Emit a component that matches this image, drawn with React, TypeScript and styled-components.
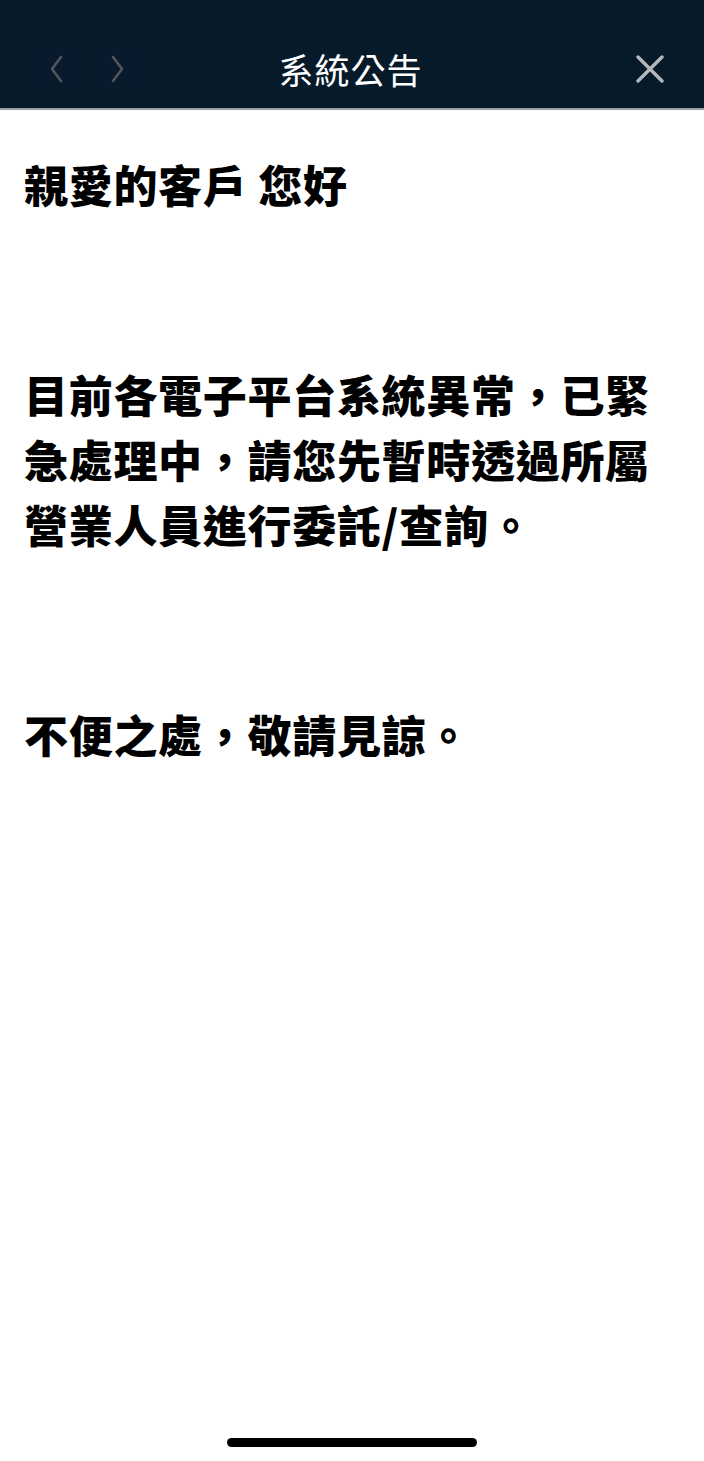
import React from "react";
import styled, { createGlobalStyle } from "styled-components";

const Global = createGlobalStyle`
  html, body { margin: 0; padding: 0; background: #ffffff; }
  body { font-family: "Noto Sans CJK TC", "Noto Sans", sans-serif; }
  * { box-sizing: border-box; }
`;

const Page = styled.div`
  width: 704px;
  height: 1461px;
  display: flex;
  flex-direction: column;
  background: #ffffff;
`;

const Header = styled.header`
  height: 110px;
  background: #061a2a;
  border-bottom: 2px solid #9aa1a8;
  display: grid;
  grid-template-columns: 1fr auto 1fr;
  align-items: end;
  padding: 0 35px 16px 32px;
`;

const NavGroup = styled.div`
  display: flex;
  gap: 10px;
`;

const NavButton = styled.button`
  width: 50px;
  height: 46px;
  border: none;
  background: #071b2c;
  display: flex;
  align-items: center;
  justify-content: center;
  padding: 0;
`;

const Title = styled.h1`
  margin: 0;
  color: #ffffff;
  font-size: 35px;
  font-weight: 400;
  line-height: 46px;
  letter-spacing: 1px;
`;

const CloseButton = styled.button`
  justify-self: end;
  width: 38px;
  height: 46px;
  border: none;
  background: transparent;
  display: flex;
  align-items: center;
  justify-content: center;
  padding: 0;
`;

const Content = styled.main`
  flex: 1;
  padding: 42px 20px 0 24px;
  color: #000000;
`;

const Para = styled.p<{ $gap?: number }>`
  margin: 0 0 ${(p) => p.$gap ?? 145}px 0;
  font-size: 44px;
  font-weight: 800;
  line-height: 65px;
  letter-spacing: 0.7px;
`;

const HomeBar = styled.div`
  display: flex;
  justify-content: center;
  padding-bottom: 14px;
`;

const Indicator = styled.div`
  width: 250px;
  height: 9px;
  border-radius: 5px;
  background: #000000;
`;

export default function App() {
  return (
    <>
      <Global />
      <Page>
        <Header>
          <NavGroup>
            <NavButton aria-label="上一則">
              <svg width="16" height="28" viewBox="0 0 16 28" fill="none">
                <path d="M12 2 L3 14 L12 26" stroke="#51565a" strokeWidth="2.6" strokeLinecap="round" strokeLinejoin="round" />
              </svg>
            </NavButton>
            <NavButton aria-label="下一則">
              <svg width="16" height="28" viewBox="0 0 16 28" fill="none">
                <path d="M4 2 L13 14 L4 26" stroke="#51565a" strokeWidth="2.6" strokeLinecap="round" strokeLinejoin="round" />
              </svg>
            </NavButton>
          </NavGroup>
          <Title>系統公告</Title>
          <CloseButton aria-label="關閉">
            <svg width="28" height="28" viewBox="0 0 28 28" fill="none">
              <path d="M2 2 L26 26 M26 2 L2 26" stroke="#b4b8bc" strokeWidth="3.4" strokeLinecap="round" />
            </svg>
          </CloseButton>
        </Header>
        <Content>
          <Para>親愛的客戶 您好</Para>
          <Para>目前各電子平台系統異常，已緊急處理中，請您先暫時透過所屬營業人員進行委託/查詢。</Para>
          <Para $gap={0}>不便之處，敬請見諒。</Para>
        </Content>
        <HomeBar>
          <Indicator />
        </HomeBar>
      </Page>
    </>
  );
}
